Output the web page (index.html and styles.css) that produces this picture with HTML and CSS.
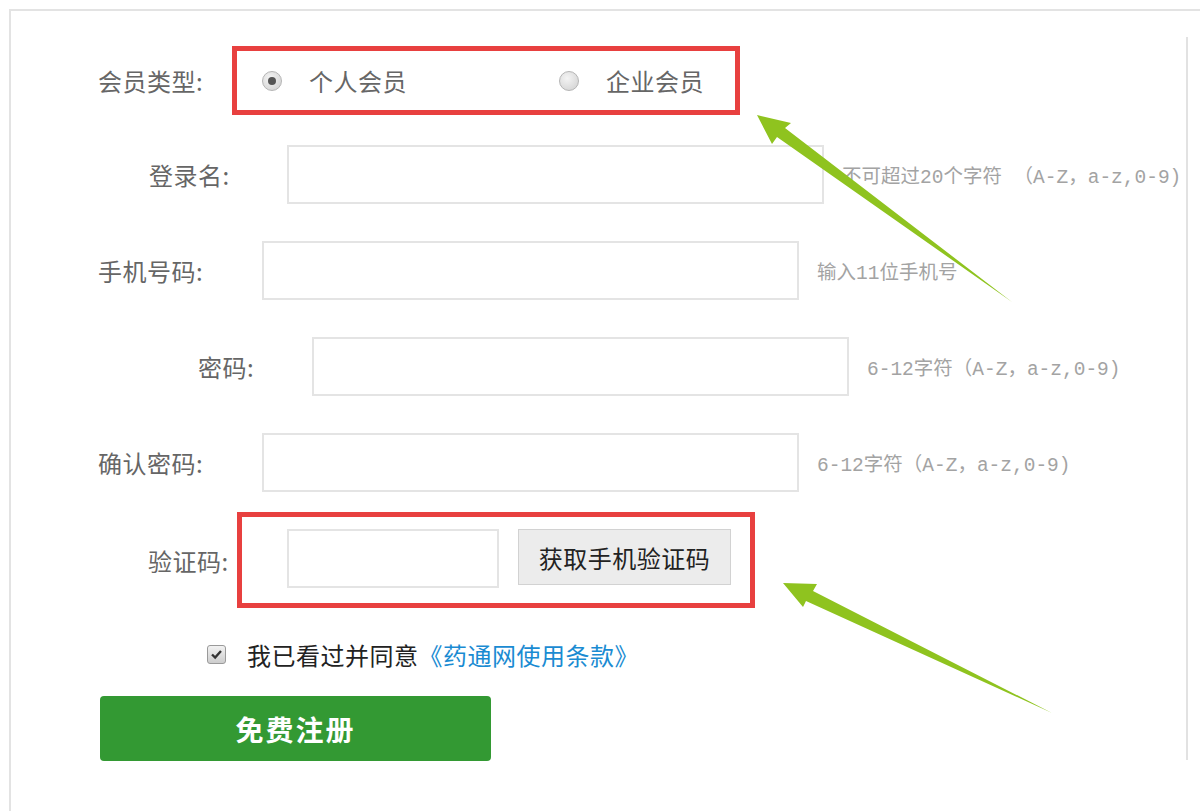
FILE: index.html
```html
<!DOCTYPE html>
<html lang="zh-CN">

<head>
    <meta charset="UTF-8">
    <title>会员注册</title>
    <link rel="stylesheet" href="styles.css">
</head>

<body>

    <div class="panel">
        <!-- Register Form -->
        <div class="reg-form">

            <div class="row row-type">
                <span class="label w-type">会员类型:</span>
                <div class="mark-box type-box">
                    <label class="opt">
                        <span class="radio checked"></span>个人会员
                    </label>
                    <label class="opt">
                        <span class="radio"></span>企业会员
                    </label>
                </div>
            </div>

            <div class="row row-gap-first">
                <span class="label w-name">登录名:</span>
                <input type="text" class="field">
                <span class="hint">不可超过20个字符 （A-Z，a-z,0-9)</span>
            </div>

            <div class="row">
                <span class="label w-four">手机号码:</span>
                <input type="text" class="field">
                <span class="hint">输入11位手机号</span>
            </div>

            <div class="row">
                <span class="label w-pwd">密码:</span>
                <input type="password" class="field">
                <span class="hint">6-12字符（A-Z，a-z,0-9)</span>
            </div>

            <div class="row">
                <span class="label w-four">确认密码:</span>
                <input type="password" class="field">
                <span class="hint">6-12字符（A-Z，a-z,0-9)</span>
            </div>

            <div class="row row-code">
                <span class="label w-code">验证码:</span>
                <div class="mark-box code-box">
                    <input type="text" class="field code-field">
                    <button class="code-btn">获取手机验证码</button>
                </div>
            </div>

            <div class="row row-agree">
                <span class="check">
                    <svg width="19" height="19" viewBox="0 0 19 19">
                        <path d="M4.5 9.5 L8 13 L14.5 5.5" fill="none" stroke="#333" stroke-width="2.6" />
                    </svg>
                </span>
                <span class="agree-text">我已看过并同意<a href="#" class="terms">《药通网使用条款》</a></span>
            </div>

            <div class="row row-submit">
                <button class="submit-btn">免费注册</button>
            </div>

        </div>
    </div>

    <!-- Green pointer arrows -->
    <svg class="arrows" width="1200" height="811" viewBox="0 0 1200 811">
        <polygon points="757,115 791,123 785,128 1012,302 777,137 772,144" fill="#8fc31f" />
        <polygon points="783,583 817,584 813,591 1052,713 806,601 803,607" fill="#8fc31f" />
    </svg>

</body>

</html>
```

FILE: styles.css
```css
body {
    margin: 0;
    position: relative;
    width: 1200px;
    height: 811px;
    overflow: hidden;
    background: #fff;
    font-family: "Noto Sans CJK SC", "Liberation Sans", sans-serif;
}

/* Frame */
.panel {
    margin: 9px 0 0 9px;
    height: 802px;
    border-top: 2px solid #e3e3e3;
    border-left: 2px solid #e3e3e3;
    box-sizing: border-box;
}

.reg-form {
    margin: 26px 12px 0 0;
    height: 723px;
    padding: 9px 0 0 87px;
    box-sizing: border-box;
    border-right: 2px solid #e2e2e2;
}

/* Rows */
.row {
    display: flex;
    align-items: center;
    margin-top: 37px;
}

.row-type {
    margin-top: 0;
}

.row-gap-first {
    margin-top: 30px;
}

.row-code {
    margin-top: 20px;
}

.row-agree {
    margin-top: 31px;
    height: 30px;
}

.row-submit {
    margin-top: 27px;
}

.label {
    flex: none;
    font-size: 24px;
    color: #666;
    letter-spacing: 0.5px;
    white-space: nowrap;
}

.w-type {
    width: 134px;
}

.w-name {
    width: 138px;
    padding-left: 51px;
}

.w-four {
    width: 164px;
}

.w-pwd {
    width: 114px;
    padding-left: 100px;
}

.w-code {
    width: 89px;
    padding-left: 50px;
}

.field {
    flex: none;
    width: 537px;
    height: 59px;
    box-sizing: border-box;
    border: 2px solid #e4e4e4;
    margin: 0;
    padding: 0 8px;
    background: #fff;
}

.hint {
    margin-left: 18px;
    font-family: "Liberation Mono", "Noto Sans CJK SC", monospace;
    font-size: 19.5px;
    color: #a3a3a3;
    white-space: nowrap;
}

/* Red highlight boxes */
.mark-box {
    flex: none;
    border: 5px solid #e8403f;
    box-sizing: border-box;
    display: flex;
}

.type-box {
    width: 508px;
    height: 69px;
    align-items: center;
    padding-left: 25px;
}

.opt {
    flex: none;
    width: 297px;
    display: flex;
    align-items: center;
    font-size: 24px;
    color: #666;
    letter-spacing: 0.5px;
}

.opt:last-child {
    width: auto;
}

.radio {
    flex: none;
    width: 20px;
    height: 20px;
    border-radius: 50%;
    box-sizing: border-box;
    border: 1px solid #b5b5b5;
    background: radial-gradient(circle at 40% 35%, #f4f4f4, #cfcfcf);
    margin-right: 27px;
    position: relative;
}

.radio.checked::after {
    content: "";
    position: absolute;
    left: 5px;
    top: 5px;
    width: 8px;
    height: 8px;
    border-radius: 50%;
    background: #555;
}

.code-box {
    width: 518px;
    height: 96px;
    align-items: flex-start;
    padding: 12px 0 0 45px;
}

.code-field {
    width: 212px;
}

.code-btn {
    flex: none;
    margin-left: 19px;
    width: 213px;
    height: 56px;
    border: 1px solid #d2d2d2;
    background: #ececec;
    color: #222;
    font-family: inherit;
    font-size: 24px;
    letter-spacing: 0.5px;
    padding: 0;
    cursor: pointer;
}

/* Agree */
.check {
    margin-left: 109px;
    width: 19px;
    height: 19px;
    border: 1px solid #9a9a9a;
    border-radius: 3px;
    box-sizing: border-box;
    background: linear-gradient(#f2f2f2, #cdcdcd);
    display: flex;
    align-items: center;
    justify-content: center;
}

.check svg {
    display: block;
}

.agree-text {
    margin-left: 21px;
    font-size: 24px;
    color: #222;
    letter-spacing: 0.5px;
}

.terms {
    color: #1a8bd2;
    text-decoration: none;
}

/* Submit */
.submit-btn {
    margin-left: 2px;
    width: 391px;
    height: 65px;
    border: none;
    border-radius: 4px;
    background: #339933;
    color: #fff;
    font-family: inherit;
    font-size: 28px;
    font-weight: bold;
    letter-spacing: 2px;
    cursor: pointer;
}

/* Arrows overlay */
.arrows {
    position: absolute;
    left: 0;
    top: 0;
    pointer-events: none;
}
```
